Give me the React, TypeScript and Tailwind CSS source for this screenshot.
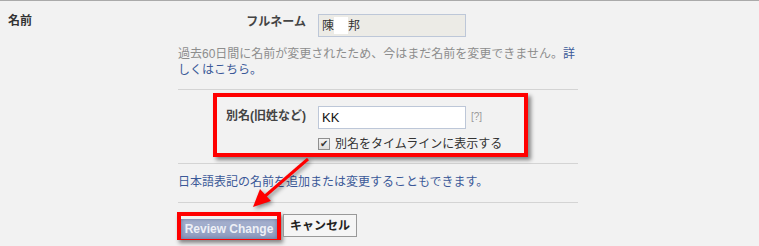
const font = "font-['Liberation_Sans','Noto_Sans_CJK_JP',sans-serif]";

const App = () => {
  return (
    <div
      className={`relative w-[759px] h-[246px] overflow-hidden bg-[#f2f2f2] border-t border-[#aaaaaa] flex ${font}`}
    >
      {/* left label */}
      <div className="w-[178px] pl-[8px] pt-[11px] text-[12px] font-bold text-[#333]">
        名前
      </div>

      {/* form column */}
      <div className="w-[400px] pt-[13px] flex flex-col">
        <div className="flex items-start">
          <div className="w-[129px] text-right text-[12px] font-bold text-[#444] leading-[15px] pt-px pr-px">
            フルネーム
          </div>
          <div className="ml-[11px] w-[148px] h-[23px] bg-[#ecebe6] border border-[#bdc7d8] flex items-center pl-[3px] text-[12px] text-[#333]">
            <span>陳</span>
            <span className="inline-block w-[14px] h-[17px] bg-white"></span>
            <span>邦</span>
          </div>
        </div>

        <p className="mt-[9px] text-[12px] leading-[16px] text-[#8d8d8d]">
          過去60日間に名前が変更されたため、今はまだ名前を変更できません。
          <span className="text-[#3b5998]">詳</span>
          <br />
          <span className="text-[#3b5998]">しくはこちら。</span>
        </p>

        <div className="mt-[11px] h-px bg-[#d4d4d4]"></div>

        <div className="mt-[16px] flex items-start">
          <div className="w-[129px] text-right text-[12px] font-bold text-[#444] pt-[3px] leading-[15px] pr-px">
            別名(旧姓など)
          </div>
          <div className="ml-[11px] w-[148px] h-[23px] bg-white border border-[#bdc7d8] flex items-center pl-[3px] text-[13px] text-[#111]">
            KK
          </div>
          <span className="ml-[5px] mt-[5px] text-[10px] leading-[12px] text-[#999]">
            [?]
          </span>
        </div>

        <div className="mt-[7px] ml-[140px] flex items-center gap-[5px]">
          <span className="w-[12px] h-[12px] border border-[#8f8f8f] bg-linear-to-b from-[#f4f4f4] to-[#dcdcdc] flex items-center justify-center text-[10px] leading-none text-[#333]">
            ✔
          </span>
          <span className="text-[12px] leading-[16px] text-[#333]">
            別名をタイムラインに表示する
          </span>
        </div>

        <div className="mt-[11px] h-px bg-[#d4d4d4]"></div>

        <p className="mt-[9px] text-[12px] leading-[18px] text-[#3b5998]">
          日本語表記の名前を追加または変更することもできます。
        </p>

        <div className="mt-[11px] h-px bg-[#d4d4d4]"></div>

        <div className="mt-[9px] -ml-px flex items-start gap-[2px]">
          <div className="w-[104px] h-[28px] border-[4px] border-[#ff0000] shadow-[2px_3px_4px_rgba(0,0,0,0.45)]">
            <button className="w-full h-full bg-linear-to-b from-[#a9b4d1] to-[#8e9bbf] shadow-[inset_0_0_4px_#65739a] text-[12px] font-bold text-[#eef0f6] leading-none">
              Review Change
            </button>
          </div>
          <button className="mt-[2px] w-[74px] h-[23px] border border-[#999] bg-[#f5f5f5] text-[12px] font-bold text-[#222] leading-none">
            キャンセル
          </button>
        </div>
      </div>

      {/* annotation box */}
      <div className="absolute left-[213px] top-[92px] w-[315px] h-[64px] border-[4px] border-[#ff0000] shadow-[3px_3px_4px_rgba(0,0,0,0.45)]"></div>

      {/* annotation arrow */}
      <svg
        className="absolute left-0 top-0 drop-shadow-[2px_2px_2px_rgba(0,0,0,0.45)]"
        width="759"
        height="246"
      >
        <line x1="308" y1="158" x2="264" y2="196" stroke="#ff0000" strokeWidth="3" />
        <polygon points="253,206 271,200 260,188" fill="#ff0000" />
      </svg>
    </div>
  );
};

export default App;
